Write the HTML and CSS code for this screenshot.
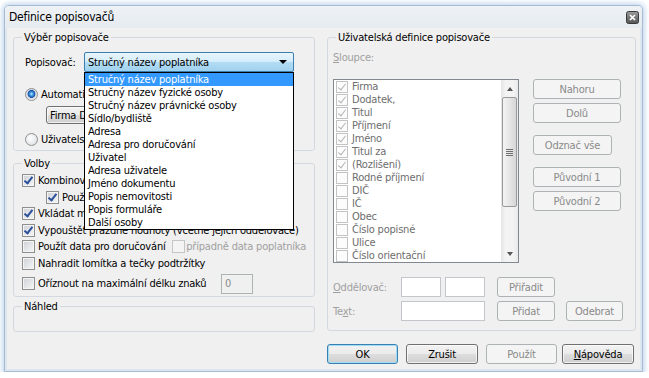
FILE: index.html
```html
<!DOCTYPE html>
<html lang="cs">
<head>
    <meta charset="UTF-8">
    <meta name="viewport" content="width=device-width, initial-scale=1.0">
    <title>Definice popisovačů</title>
    <link rel="stylesheet" href="styles.css">
</head>
<body>

    <div class="window">
        <div class="titlebar">
            <span class="title">Definice popisovačů</span>
            <span class="close">
                <svg width="13" height="13" viewBox="0 0 13 13">
                    <defs>
                        <linearGradient id="cg" x1="0" y1="0" x2="0" y2="1">
                            <stop offset="0" stop-color="#9b9b9b"/>
                            <stop offset="1" stop-color="#555"/>
                        </linearGradient>
                    </defs>
                    <rect x="0.5" y="0.5" width="12" height="12" rx="2" fill="url(#cg)" stroke="#3a3a3a"/>
                    <path d="M4 4 L9 9 M9 4 L4 9" stroke="#fff" stroke-width="1.7"/>
                </svg>
            </span>
        </div>

        <div class="client">
            <div class="main">
                <div class="left-col">
                    <fieldset class="group g-select">
                        <legend>Výběr popisovače</legend>
                        <div class="combo-row">
                            <span class="combo-label">Popisovač:</span>
                            <div class="combo">
                                <div class="combo-box">
                                    <span>Stručný název poplatníka</span>
                                    <span class="combo-arrow"></span>
                                </div>
                                <ul class="combo-list">
                                    <li class="sel">Stručný název poplatníka</li>
                                    <li>Stručný název fyzické osoby</li>
                                    <li>Stručný název právnické osoby</li>
                                    <li>Sídlo/bydliště</li>
                                    <li>Adresa</li>
                                    <li>Adresa pro doručování</li>
                                    <li>Uživatel</li>
                                    <li>Adresa uživatele</li>
                                    <li>Jméno dokumentu</li>
                                    <li>Popis nemovitosti</li>
                                    <li>Popis formuláře</li>
                                    <li>Další osoby</li>
                                </ul>
                            </div>
                        </div>
                        <div class="opt radio-auto"><span class="radio on"></span>Automaticky</div>
                        <button class="btn btn-firma">Firma Dodatek</button>
                        <div class="opt radio-user"><span class="radio"></span>Uživatelský</div>
                    </fieldset>

                    <fieldset class="group g-volby">
                        <legend>Volby</legend>
                        <div class="opts">
                            <div class="opt"><span class="chk on"></span>Kombinovat popisovače</div>
                            <div class="opt indent"><span class="chk on"></span>Použít oddělovač</div>
                            <div class="opt"><span class="chk on"></span>Vkládat mezery</div>
                            <div class="opt"><span class="chk on"></span>Vypouštět prázdné hodnoty (včetně jejich oddělovače)</div>
                            <div class="opt">
                                <span class="chk"></span><span class="w-dor">Použít data pro doručování</span>
                                <span class="chk dis"></span><span class="dis-text">případně data poplatníka</span>
                            </div>
                            <div class="opt"><span class="chk"></span>Nahradit lomítka a tečky podtržítky</div>
                            <div class="opt opt-len">
                                <span class="chk"></span><span class="w-len">Oříznout na maximální délku znaků</span>
                                <span class="edit edit-len">0</span>
                            </div>
                        </div>
                    </fieldset>

                    <fieldset class="group g-nahled">
                        <legend>Náhled</legend>
                    </fieldset>
                </div>

                <fieldset class="group g-user">
                    <legend>Uživatelská definice popisovače</legend>
                    <div class="dis-text"><u>S</u>loupce:</div>

                    <div class="cols-row">
                        <div class="listbox">
                            <ul class="items">
                                <li><span class="lchk on"></span>Firma</li>
                                <li><span class="lchk on"></span>Dodatek,</li>
                                <li><span class="lchk on"></span>Titul</li>
                                <li><span class="lchk on"></span>Příjmení</li>
                                <li><span class="lchk on"></span>Jméno</li>
                                <li><span class="lchk on"></span>Titul za</li>
                                <li><span class="lchk on"></span>(Rozlišení)</li>
                                <li><span class="lchk"></span>Rodné příjmení</li>
                                <li><span class="lchk"></span>DIČ</li>
                                <li><span class="lchk"></span>IČ</li>
                                <li><span class="lchk"></span>Obec</li>
                                <li><span class="lchk"></span>Číslo popisné</li>
                                <li><span class="lchk"></span>Ulice</li>
                                <li><span class="lchk"></span>Číslo orientační</li>
                            </ul>
                            <div class="vscroll">
                                <div class="sb-btn"><span class="arr-up"></span></div>
                                <div class="sb-track">
                                    <div class="sb-thumb"><span class="grip"></span></div>
                                </div>
                                <div class="sb-btn"><span class="arr-down"></span></div>
                            </div>
                        </div>

                        <div class="side-btns">
                            <button class="btn dis b-up">Nahoru</button>
                            <button class="btn dis b-down">Dolů</button>
                            <button class="btn dis b-clear">Odznač vše</button>
                            <button class="btn dis b-orig1">Původní 1</button>
                            <button class="btn dis b-orig2">Původní 2</button>
                        </div>
                    </div>

                    <div class="edit-row sep-row">
                        <span class="dis-text edit-label"><u>O</u>ddělovač:</span>
                        <span class="edit w40"></span>
                        <span class="edit w40 ml4"></span>
                        <button class="btn dis b-assign">Přiřadit</button>
                    </div>
                    <div class="edit-row text-row">
                        <span class="dis-text edit-label">Te<u>x</u>t:</span>
                        <span class="edit w84"></span>
                        <button class="btn dis b-assign">Přidat</button>
                        <button class="btn dis b-remove">Odebrat</button>
                    </div>
                </fieldset>
            </div>

            <div class="footer">
                <button class="btn default b-ok">OK</button>
                <button class="btn b-cancel">Zrušit</button>
                <button class="btn dis b-apply">Použít</button>
                <button class="btn b-help"><u>N</u>ápověda</button>
            </div>
        </div>
    </div>

</body>
</html>
```

FILE: styles.css
```css
/* Reset */
* {
    margin: 0;
    padding: 0;
    box-sizing: border-box;
}

body {
    background: #fff;
    font-family: "DejaVu Sans Condensed", "Liberation Sans", sans-serif;
    font-size: 11px;
    line-height: 13px;
    letter-spacing: -0.2px;
    color: #000;
}

/* Okno */
.window {
    width: 639px;
    height: 367px;
    margin: 5px 0 0 4px;
    border: 1px solid #a9bbd1;
    border-radius: 5px 5px 0 0;
    background: #dce6f1;
    box-shadow: 0 0 5px 2px rgba(150, 185, 225, 0.55);
    display: flex;
    flex-direction: column;
}

.titlebar {
    height: 22px;
    display: flex;
    align-items: center;
    padding-left: 4px;
    background: linear-gradient(#eef2f6, #e6ebf0);
    border-radius: 4px 4px 0 0;
}

.title {
    font-size: 12px;
    flex: 1;
}

.close {
    display: flex;
    margin-right: 3px;
    margin-top: 1px;
}

.client {
    flex: 1;
    margin: 0 2px 2px;
    background: #f0f0f0;
    padding: 3px 4px 0 6px;
}

.main {
    display: flex;
    gap: 12px;
}

.left-col {
    width: 302px;
    display: flex;
    flex-direction: column;
}

/* Skupiny */
.group {
    border: 1px solid #d3d9de;
    border-radius: 3px;
    padding: 0 8px;
    min-width: 0;
}

.group legend {
    padding: 0 2px;
    height: 13px;
}

.g-select {
    height: 120px;
    padding-top: 8px;
}

.g-volby {
    height: 140px;
    margin-top: 6px;
    padding-top: 4px;
}

.g-nahled {
    height: 32px;
    margin-top: 3px;
}

.g-user {
    width: 309px;
    height: 300px;
    padding: 7px 5px 0;
}

.g-user legend {
    margin-left: 3px;
}

/* Combo */
.combo-row {
    display: flex;
    align-items: center;
    height: 20px;
}

.combo-label {
    width: 62px;
    padding-left: 3px;
}

.combo {
    position: relative;
    width: 210px;
}

.combo-box {
    height: 20px;
    display: flex;
    align-items: center;
    padding-left: 3px;
    border: 1px solid #3c7fb1;
    border-radius: 2px;
    background: linear-gradient(#e8f5fc, #d4edfb 48%, #b3dcf4 52%, #9fd1ef);
}

.combo-box span:first-child {
    flex: 1;
}

.combo-arrow {
    width: 0;
    height: 0;
    border-left: 4px solid transparent;
    border-right: 4px solid transparent;
    border-top: 4px solid #000;
    margin-right: 6px;
}

.combo-list {
    position: absolute;
    top: 20px;
    left: 0;
    width: 210px;
    list-style: none;
    background: #fff;
    border: 1px solid #000;
    z-index: 5;
}

.combo-list li {
    height: 13px;
    padding-left: 3px;
    white-space: nowrap;
}

.combo-list li.sel {
    background: #3399ff;
    color: #fff;
}

/* Volby */
.opt {
    display: flex;
    align-items: center;
    height: 13px;
    white-space: nowrap;
}

.radio-auto {
    margin: 16px 0 0 3px;
}

.radio-user {
    margin: 9px 0 0 3px;
}

.opts {
    display: flex;
    flex-direction: column;
    gap: 3.6px;
}

.indent {
    padding-left: 24px;
}

.opt-len {
    height: 20px;
}

.w-dor {
    width: 138px;
}

.w-len {
    width: 183px;
}

.radio {
    width: 13px;
    height: 13px;
    border-radius: 50%;
    border: 1px solid #8e8f8f;
    background: radial-gradient(circle at 40% 40%, #fff, #d6dadf);
    margin-right: 3px;
    flex-shrink: 0;
}

.radio.on {
    background: radial-gradient(circle at 50% 45%, #c4ecff 0, #3d9ae2 1.8px, #1a4ea6 3.6px, #cfd6de 4.2px, #f2f2f2 6px);
}

.chk {
    position: relative;
    width: 13px;
    height: 13px;
    border: 1px solid #8e8f8f;
    background: linear-gradient(135deg, #cdd1d6, #f7f7f7);
    box-shadow: inset 0 0 0 1px #f4f4f4;
    margin-right: 3px;
    flex-shrink: 0;
}

.chk.on::after {
    content: "";
    position: absolute;
    left: 3px;
    top: 0px;
    width: 3px;
    height: 7px;
    border: solid #2a4f9c;
    border-width: 0 2px 2px 0;
    transform: rotate(38deg);
}

.chk.dis {
    border-color: #c4c7ca;
    background: #f4f4f4;
    margin-right: 1px;
}

.dis-text {
    color: #a0a0a0;
}

/* Tlacitka */
.btn {
    height: 20px;
    border: 1px solid #707070;
    border-radius: 3px;
    background: linear-gradient(#f2f2f2 0%, #ebebeb 48%, #dddddd 52%, #cfcfcf 100%);
    box-shadow: inset 0 0 0 1px rgba(255, 255, 255, 0.7);
    font: inherit;
    letter-spacing: inherit;
    color: #000;
    flex-shrink: 0;
}

.btn.dis {
    border-color: #adb2b5;
    background: #f4f4f4;
    box-shadow: none;
    color: #8a8a8a;
}

.btn.default {
    border-color: #3c7fb1;
    box-shadow: inset 0 0 0 1px #9fdcf6;
}

.btn-firma {
    display: block;
    width: 100px;
    height: 18px;
    margin: 5px 0 0 24px;
    text-align: left;
    padding-left: 3px;
    white-space: nowrap;
}

/* Uzivatelska definice */
.cols-row {
    display: flex;
    gap: 14px;
    margin-top: 15px;
}

.listbox {
    width: 186px;
    height: 184px;
    border: 1px solid #828790;
    background: #fff;
    display: flex;
}

.items {
    flex: 1;
    list-style: none;
    padding-left: 2px;
    color: #6d6d6d;
    overflow: hidden;
}

.items li {
    height: 13px;
    display: flex;
    align-items: center;
    white-space: nowrap;
}

.lchk {
    position: relative;
    width: 12px;
    height: 12px;
    border: 1px solid #c3c3c3;
    background: #fcfcfc;
    margin-right: 4px;
}

.lchk.on::after {
    content: "";
    position: absolute;
    left: 3px;
    top: 0;
    width: 3px;
    height: 7px;
    border: solid #b5b5b5;
    border-width: 0 1.5px 1.5px 0;
    transform: rotate(38deg);
}

.vscroll {
    width: 17px;
    display: flex;
    flex-direction: column;
    background: linear-gradient(90deg, #e4e4e4, #f3f3f3 25%, #f3f3f3 75%, #e9e9e9);
}

.sb-btn {
    height: 17px;
    display: flex;
    align-items: center;
    justify-content: center;
}

.arr-up,
.arr-down {
    width: 0;
    height: 0;
    border-left: 3.5px solid transparent;
    border-right: 3.5px solid transparent;
}

.arr-up {
    border-bottom: 4px solid #555;
}

.arr-down {
    border-top: 4px solid #555;
}

.sb-track {
    flex: 1;
}

.sb-thumb {
    height: 110px;
    margin: 0 1px;
    border: 1px solid #9a9a9a;
    border-radius: 2px;
    background: linear-gradient(90deg, #f3f3f3, #e6e6e6 50%, #d6d6d6);
    display: flex;
    align-items: center;
    justify-content: center;
}

.grip {
    width: 7px;
    height: 7px;
    background: repeating-linear-gradient(#6f6f6f 0 1px, transparent 1px 2px);
}

.side-btns {
    display: flex;
    flex-direction: column;
    align-items: flex-start;
}

.side-btns .btn {
    width: 88px;
}

.side-btns .b-down,
.side-btns .b-orig2 {
    margin-top: 4px;
}

.side-btns .b-clear {
    width: 79px;
    margin-top: 12px;
}

.side-btns .b-orig1 {
    margin-top: 12px;
}

.edit-row {
    display: flex;
    align-items: center;
    height: 20px;
}

.sep-row {
    margin-top: 14px;
}

.text-row {
    margin-top: 4px;
}

.edit-label {
    width: 68px;
}

.edit {
    height: 20px;
    border: 1px solid #c3c6ca;
    background: #fff;
    display: block;
}

.w40 {
    width: 40px;
}

.w84 {
    width: 84px;
}

.ml4 {
    margin-left: 4px;
}

.b-assign {
    width: 58px;
    margin-left: 12px;
}

.b-remove {
    width: 57px;
    margin-left: 11px;
}

.edit-len {
    width: 32px;
    background: #f0f0f0;
    border-color: #adb2b5;
    color: #8a8a8a;
    padding: 2px 0 0 3px;
}

/* Spodni tlacitka */
.footer {
    display: flex;
    margin-top: 12px;
    padding-left: 314px;
}

.b-ok {
    width: 71px;
}

.b-cancel {
    width: 72px;
    margin-left: 8px;
}

.b-apply {
    width: 71px;
    margin-left: 8px;
}

.b-help {
    width: 72px;
    margin-left: 5px;
}
```
